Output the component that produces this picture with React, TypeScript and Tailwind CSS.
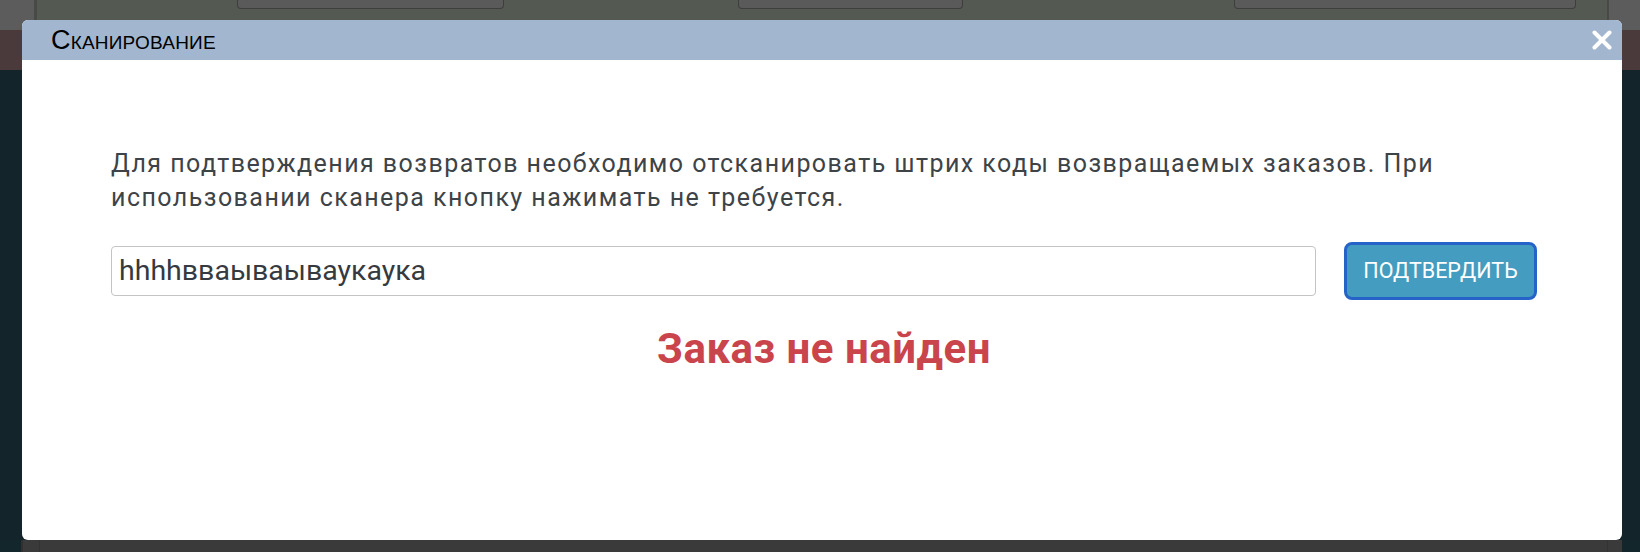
import React from "react";

export default function App() {
  return (
    <div className="relative w-[1640px] h-[552px] overflow-hidden bg-[#13252a] font-['Roboto',sans-serif]">
      {/* background page under the overlay */}
      <div className="flex flex-col h-full">
        <div className="flex h-[30px] bg-[#545952]">
          <div className="w-[37px] bg-[#5c5c5c] border-r-[3px] border-[#474a47]" />
          <div className="flex-1 flex">
            <div className="ml-[200px] w-[267px] h-[9px] bg-[#5a5a5a] border border-t-0 border-[#3e3e3e] rounded-b-[4px]" />
            <div className="ml-[234px] w-[225px] h-[9px] bg-[#5a5a5a] border border-t-0 border-[#3e3e3e] rounded-b-[4px]" />
            <div className="ml-[271px] w-[342px] h-[9px] bg-[#5a5a5a] border border-t-0 border-[#3e3e3e] rounded-b-[4px]" />
          </div>
          <div className="w-[33px] bg-[#5c5c5c] border-l-[2px] border-[#474a47]" />
        </div>
        <div className="h-[40px] bg-[#4a3a3c]" />
        <div className="flex-1 bg-[#13252a]" />
        <div className="h-[12px] flex">
          <div className="w-[21px] bg-[#13262b]" />
          <div className="flex-1 bg-[#3a3a3a] border-l-[2px] border-[#303030]">
            <div className="ml-[16px] mr-[14px] h-full border-x border-[#333333]" />
          </div>
          <div className="w-[18px] bg-[#13262b]" />
        </div>
      </div>

      {/* modal */}
      <div className="absolute left-[22px] top-[20px] w-[1600px] h-[520px] bg-white rounded-[6px] overflow-hidden flex flex-col">
        <div className="h-[40px] bg-[#a2b7cf] flex items-center justify-between pl-[29px] pr-[10px]">
          <span className="font-['Liberation_Sans',sans-serif] text-[27px] leading-none text-black [font-variant:small-caps] tracking-[0.2px]">
            Сканирование
          </span>
          <svg width="20" height="20" viewBox="0 0 20 20" className="block">
            <path d="M2.5 2.5 L17.5 17.5 M17.5 2.5 L2.5 17.5" stroke="white" strokeWidth="4" strokeLinecap="round" />
          </svg>
        </div>
        <div className="flex-1 pt-[87px] pl-[89px] pr-[85px] flex flex-col">
          <p className="text-[25px] leading-[34px] tracking-[1.45px] text-[#3d4347]">
            Для подтверждения возвратов необходимо отсканировать штрих коды возвращаемых заказов. При использовании сканера кнопку нажимать не требуется.
          </p>
          <div className="mt-[27px] flex items-center gap-[28px]">
            <div className="flex-1 h-[50px] border border-[#c4c4c4] rounded-[4px] flex items-center pl-[7px] text-[28.5px] text-[#343a40]">
              hhhhвваываываукаука
            </div>
            <button className="w-[193px] h-[58px] border-[3px] border-[#2563c9] rounded-[8px] bg-[#449dc0] text-white text-[21.5px] uppercase flex items-center justify-center">
              Подтвердить
            </button>
          </div>
          <div className="mt-[24px] text-center text-[42px] leading-[50px] tracking-[0.5px] font-bold text-[#c9444b]">
            Заказ не найден
          </div>
        </div>
      </div>
    </div>
  );
}
